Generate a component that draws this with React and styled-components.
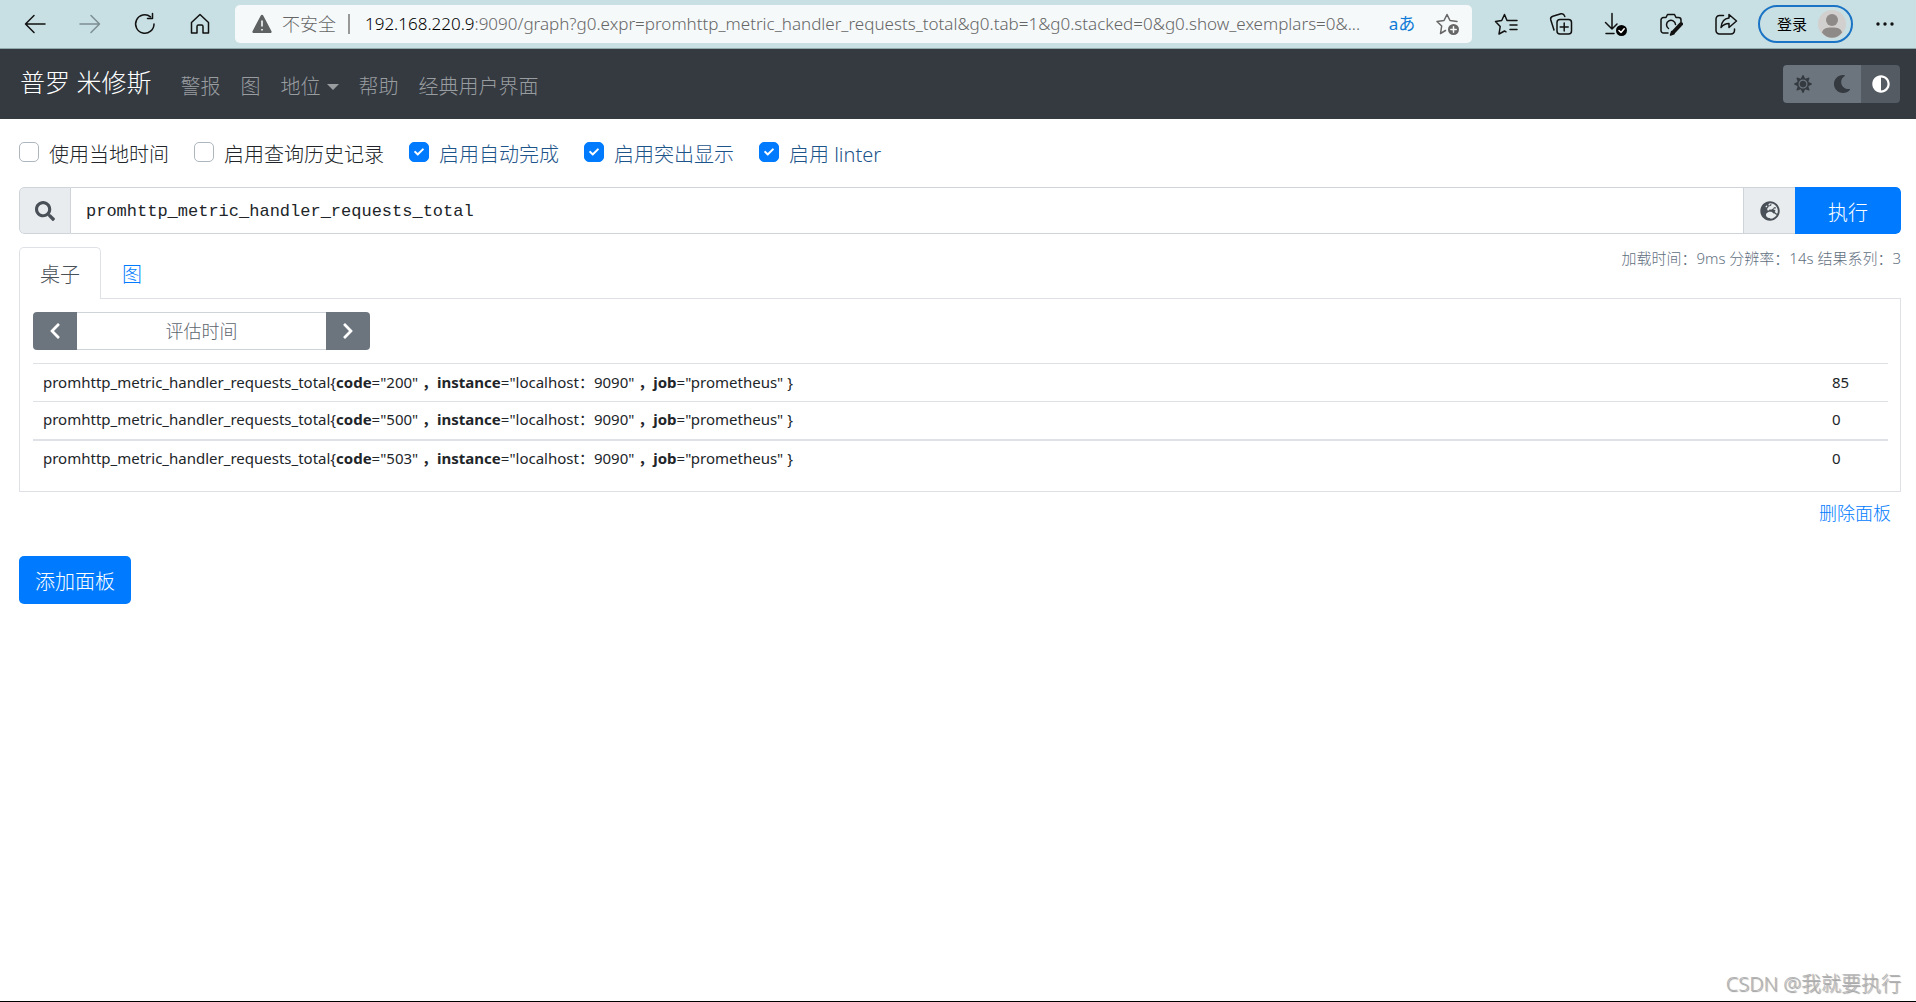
import styled, { createGlobalStyle } from "styled-components";
import {
  FaAdjust,
  FaCheck,
  FaChevronLeft,
  FaChevronRight,
  FaGlobeEurope,
  FaMoon,
  FaSearch,
  FaSun,
} from "react-icons/fa";

const GlobalStyle = createGlobalStyle`
  * {
    box-sizing: border-box;
  }

  body {
    margin: 0;
    background: #fff;
    color: #212529;
    font-family: "Noto Sans", "Noto Sans CJK SC", sans-serif;
    font-size: 20px;
    font-weight: 300;
    line-height: 30px;
  }

  button,
  input {
    font: inherit;
    margin: 0;
  }

  a {
    color: #007bff;
    text-decoration: none;
  }
`;

const Page = styled.div`
  display: flex;
  flex-direction: column;
  min-height: 100vh;
  border-bottom: 1px solid #000;
`;

/* browser bar */

const BrowserBar = styled.header`
  display: flex;
  align-items: center;
  height: 49px;
  padding: 0 15px 0 19px;
  background: #c8dfe3;
  border-bottom: 1px solid #8fa9ac;
`;

const BarButtons = styled.div`
  display: flex;
  align-items: center;
  gap: ${(p) => p.$gap}px;
`;

const BarButton = styled.button`
  display: flex;
  align-items: center;
  justify-content: center;
  width: 32px;
  height: 32px;
  padding: 0;
  border: 0;
  background: none;
  color: ${(p) => p.$color || "#111"};
  font-size: 17px;
  font-weight: 400;
`;

const AddressBar = styled.div`
  flex: 1;
  display: flex;
  align-items: center;
  height: 38px;
  margin: 0 18px 0 19px;
  padding: 0 8px 0 17px;
  border-radius: 5px;
  background: #f5f9fa;
  font-size: 18px;
  color: #666;
`;

const Insecure = styled.span`
  margin-left: 10px;
  padding-right: 12px;
  border-right: 2px solid #999;
  line-height: 20px;
`;

const Host = styled.label`
  margin-left: 15px;
  color: #000;
  font-size: 17px;
`;

const UrlInput = styled.input`
  flex: 1;
  min-width: 0;
  padding: 0;
  border: 0;
  outline: 0;
  background: none;
  color: #666;
  font-size: 17px;
`;

const LoginButton = styled.button`
  display: flex;
  align-items: center;
  gap: 11px;
  height: 38px;
  margin: 0 16px;
  padding: 0 5px 0 17px;
  border: 2px solid #1a73c4;
  border-radius: 19px;
  background: none;
  color: #000;
  font-size: 15px;
  font-weight: 400;
`;

/* prometheus header */

const Navbar = styled.nav`
  display: flex;
  align-items: center;
  height: 70px;
  padding: 0 16px 0 20px;
  background: #343a40;
`;

const Brand = styled.a`
  margin-right: 19px;
  padding-bottom: 4px;
  color: #fff;
  font-size: 25px;
`;

const NavLink = styled.a`
  display: flex;
  align-items: center;
  padding: 5px 10px 0;
  color: #9a9da0;
`;

const Caret = styled.span`
  margin-left: 6px;
  border: 6px solid transparent;
  border-top-color: #9a9da0;
  border-bottom: 0;
`;

const ThemeGroup = styled.div`
  display: flex;
  margin-left: auto;
  border-radius: 4px;
  overflow: hidden;
`;

const ThemeButton = styled.button`
  display: flex;
  align-items: center;
  justify-content: center;
  width: 39px;
  height: 38px;
  padding: 0;
  border: 0;
  background: ${(p) => (p.$active ? "#545b62" : "#6c757d")};
  color: ${(p) => (p.$active ? "#fff" : "#343a40")};
  font-size: 18px;
`;

/* content */

const Main = styled.main`
  padding: 19px 15px 0 19px;
`;

const Options = styled.div`
  display: flex;
  flex-wrap: wrap;
  gap: 25px;
`;

const Option = styled.label`
  display: flex;
  align-items: center;
  gap: 10px;
  padding-top: 2px;
  color: ${(p) => (p.$on ? "#1d5489" : "#212529")};
`;

const Box = styled.span`
  display: grid;
  width: 20px;
  height: 20px;
  margin-bottom: 6px;

  input,
  svg {
    grid-area: 1 / 1;
  }

  input {
    appearance: none;
    width: 20px;
    height: 20px;
    border: 1px solid #adb5bd;
    border-radius: 5px;
    background: #fff;
  }

  input:checked {
    border-color: #007bff;
    background: #007bff;
  }

  svg {
    place-self: center;
    width: 10px;
    height: 10px;
    color: #fff;
    pointer-events: none;
  }
`;

const ExprRow = styled.form`
  display: flex;
  height: 47px;
  margin-top: 17px;
  border-radius: 5px;
  overflow: hidden;
`;

const Addon = styled.label`
  display: flex;
  align-items: center;
  justify-content: center;
  width: 52px;
  border: 1px solid #ced4da;
  border-radius: 5px 0 0 5px;
  background: #e9ecef;
  color: #495057;
  font-size: 20px;
`;

const AddonButton = styled(Addon).attrs({ as: "button", type: "button" })`
  border-right: 0;
  border-radius: 0;
`;

const ExprInput = styled.input`
  flex: 1;
  min-width: 0;
  padding: 2px 15px 0;
  border: 1px solid #ced4da;
  border-width: 1px 0;
  outline: 0;
  color: #212529;
  font-family: "Liberation Mono", monospace;
  font-size: 17px;
`;

const PrimaryButton = styled.button`
  height: ${(p) => p.$height}px;
  padding: 5px ${(p) => p.$pad}px 0;
  border: 0;
  border-radius: ${(p) => (p.$joined ? "0 5px 5px 0" : "5px")};
  background: #007bff;
  color: #fff;
`;

const TabRow = styled.div`
  display: flex;
  align-items: flex-start;
  margin-top: 13px;
`;

const Tab = styled.button`
  height: 52px;
  margin-bottom: -1px;
  padding: 2px 20px 0;
  border: 1px solid ${(p) => (p.$active ? "#dee2e6" : "transparent")};
  border-bottom: 0;
  border-radius: 5px 5px 0 0;
  background: ${(p) => (p.$active ? "#fff" : "none")};
  color: ${(p) => (p.$active ? "#495057" : "#007bff")};
`;

const Stats = styled.span`
  margin-left: auto;
  color: #5f7081;
  font-size: 15px;
  line-height: 22px;
`;

const Panel = styled.section`
  padding: 13px 12px 13px 13px;
  border: 1px solid #dee2e6;
`;

const TimeGroup = styled.div`
  display: flex;
  width: 337px;
  height: 38px;
  margin-bottom: 13px;
`;

const StepButton = styled.button`
  display: flex;
  align-items: center;
  justify-content: center;
  width: 44px;
  border: 0;
  border-radius: ${(p) => (p.$end ? "0 4px 4px 0" : "4px 0 0 4px")};
  background: #6c757d;
  color: #fff;
  font-size: 18px;
`;

const TimeInput = styled.input`
  flex: 1;
  min-width: 0;
  padding: 0;
  border: 1px solid #ced4da;
  border-width: 1px 0;
  outline: 0;
  font-size: 18px;
  text-align: center;

  &::placeholder {
    color: #5c656d;
    opacity: 1;
  }
`;

const ResultTable = styled.table`
  width: 100%;
  border-collapse: collapse;
  font-size: 15px;
  font-weight: 400;
  line-height: 24px;

  td {
    height: 38px;
    padding: 0 10px 2px;
    border-top: 1px solid #dee2e6;
  }

  tr:last-child td {
    border-top-width: 2px;
  }

  td:last-child {
    width: 66px;
  }

  b {
    font-weight: 700;
  }
`;

const PanelFooter = styled.div`
  display: flex;
  justify-content: flex-end;
  padding: 6px 10px 0 0;
  margin-bottom: 28px;
`;

const LinkButton = styled.button`
  padding: 0;
  border: 0;
  background: none;
  color: #007bff;
  font-size: 18px;
`;

const Credit = styled.footer`
  margin-top: auto;
  padding: 0 15px 2px;
  color: #b4b4b4;
  text-align: right;
  text-shadow: 1px 1px 1px #999;
`;

const Icon = ({ size = 24, children }) => (
  <svg
    width={size}
    height={size}
    viewBox="0 0 24 24"
    fill="none"
    stroke="currentColor"
    strokeWidth="1.5"
    strokeLinecap="round"
    strokeLinejoin="round"
    aria-hidden="true"
  >
    {children}
  </svg>
);

const BackIcon = () => (
  <Icon>
    <path d="M22 12H2.500M11 3.500 2.500 12l8.500 8.500" />
  </Icon>
);

const ForwardIcon = () => (
  <Icon>
    <path d="M2 12h19.500M13 3.500l8.500 8.500-8.500 8.500" />
  </Icon>
);

const ReloadIcon = () => (
  <Icon>
    <path d="M21 12a9.200 9.200 0 1 1-3.500-7.200M19.500 1.500v5h-5" />
  </Icon>
);

const HomeIcon = () => (
  <Icon>
    <path d="M3.500 10.500 12 2.500l8.500 8v10.500h-5.500v-6.500a1.500 1.500 0 0 0-1.500-1.500h-3a1.500 1.500 0 0 0-1.500 1.500v6.500H3.500z" />
  </Icon>
);

const WarningIcon = () => (
  <svg width="20" height="20" viewBox="0 0 20 20" aria-hidden="true">
    <path d="M8.800 1.500a1.400 1.400 0 0 1 2.400 0l8.300 15.700a1.300 1.300 0 0 1-1.200 1.900H1.700a1.300 1.300 0 0 1-1.200-1.900z" fill="#5f6263" />
    <path d="M10 6.500v6M10 15v1.500" stroke="#f5f9fa" strokeWidth="1.600" />
  </svg>
);

const AddFavoriteIcon = () => (
  <Icon>
    <path d="M9.500 18.500 4.500 21.500l1.200-7.500L1 9.500l7-1L11 2.500l3 6 7 1" />
    <circle cx="17.500" cy="17.500" r="5.500" fill="currentColor" stroke="none" />
    <path d="M17.500 14.800v5.400M14.800 17.500h5.400" stroke="#f5f9fa" />
  </Icon>
);

const FavoritesIcon = () => (
  <Icon>
    <path d="M14.500 8.500h8.500M16 13h7M16 17.500h7M14 8.500h-1L10.500 2.500 7.700 8.500 1.500 9.500l4.700 5-1.200 7.500 5.500-3 1.500.8" />
  </Icon>
);

const CollectionsIcon = () => (
  <Icon>
    <rect x="8" y="7.500" width="14.500" height="14.500" rx="3" />
    <path d="M15.200 11v8M11.200 15h8M5 18 1.800 8a3 3 0 0 1 2-3.700L12 1.800a3 3 0 0 1 3.500 2l.3.700" />
  </Icon>
);

const DownloadIcon = () => (
  <Icon>
    <path d="M8 1.500V17M1.500 10.500 8 17l5-5M2 21.500h8" />
    <circle cx="17.500" cy="18.500" r="5.500" fill="#000" stroke="none" />
    <path d="m15 18.500 2 2 3.200-3.700" stroke="#fff" />
  </Icon>
);

const CaptureIcon = () => (
  <Icon>
    <path d="M9 21H4.500A2.500 2.500 0 0 1 2 18.500V8a2.500 2.500 0 0 1 2.500-2.500H7L8.500 2.500h7L17 5.500h2.500A2.500 2.500 0 0 1 22 8v2M9.500 16.500a4.500 4.500 0 1 1 7-4" />
    <path d="m14.500 20 7.500-8" strokeWidth="4" />
    <path d="m11.500 23 1.200-3.500 2.300 2.300z" fill="currentColor" />
  </Icon>
);

const ShareIcon = () => (
  <Icon>
    <path d="M9.500 3.500h-4A3.500 3.500 0 0 0 2 7v11.500A3.500 3.500 0 0 0 5.500 22H17a3.500 3.500 0 0 0 3.500-3.500V17" />
    <path d="M15 2.500 22.500 9 15 15.500v-4c-4 0-6 1.500-8 4 .5-5.500 3-9 8-9.500z" />
  </Icon>
);

const MoreIcon = () => (
  <Icon>
    <g fill="currentColor" stroke="none">
      <circle cx="5" cy="12" r="1.700" />
      <circle cx="12" cy="12" r="1.700" />
      <circle cx="19" cy="12" r="1.700" />
    </g>
  </Icon>
);

const Avatar = () => (
  <svg width="28" height="28" viewBox="0 0 28 28" aria-hidden="true">
    <circle cx="14" cy="14" r="14" fill="#d2d0ce" />
    <circle cx="14" cy="10" r="6" fill="#8e8a87" />
    <path d="M4 22.500c1-4 4-5 10-5s9 1 10 5c-5 7-15 7-20 0z" fill="#8e8a87" />
  </svg>
);

const options = [
  { id: "local-time", label: "使用当地时间", on: false },
  { id: "history", label: "启用查询历史记录", on: false },
  { id: "autocomplete", label: "启用自动完成", on: true },
  { id: "highlighting", label: "启用突出显示", on: true },
  { id: "linter", label: "启用 linter", on: true },
];

const results = [
  { code: "200", value: 85 },
  { code: "500", value: 0 },
  { code: "503", value: 0 },
];

const App = () => {
  return (
    <Page>
      <GlobalStyle />
      <BrowserBar>
        <BarButtons $gap={23}>
          <BarButton aria-label="返回"><BackIcon /></BarButton>
          <BarButton aria-label="前进" $color="#7d8f93"><ForwardIcon /></BarButton>
          <BarButton aria-label="刷新"><ReloadIcon /></BarButton>
          <BarButton aria-label="主页"><HomeIcon /></BarButton>
        </BarButtons>
        <AddressBar>
          <WarningIcon />
          <Insecure>不安全</Insecure>
          <Host htmlFor="url">192.168.220.9</Host>
          <UrlInput
            id="url"
            defaultValue=":9090/graph?g0.expr=promhttp_metric_handler_requests_total&g0.tab=1&g0.stacked=0&g0.show_exemplars=0&..."
          />
          <BarButtons $gap={14}>
            <BarButton $color="#0f7bd6">aあ</BarButton>
            <BarButton aria-label="收藏" $color="#666"><AddFavoriteIcon /></BarButton>
          </BarButtons>
        </AddressBar>
        <BarButtons $gap={23}>
          <BarButton aria-label="收藏夹"><FavoritesIcon /></BarButton>
          <BarButton aria-label="集锦"><CollectionsIcon /></BarButton>
          <BarButton aria-label="下载"><DownloadIcon /></BarButton>
          <BarButton aria-label="截图"><CaptureIcon /></BarButton>
          <BarButton aria-label="共享"><ShareIcon /></BarButton>
        </BarButtons>
        <LoginButton>
          登录
          <Avatar />
        </LoginButton>
        <BarButton aria-label="更多"><MoreIcon /></BarButton>
      </BrowserBar>

      <Navbar>
        <Brand href="#">普罗 米修斯</Brand>
        <NavLink href="#">警报</NavLink>
        <NavLink href="#">图</NavLink>
        <NavLink href="#">地位<Caret /></NavLink>
        <NavLink href="#">帮助</NavLink>
        <NavLink href="#">经典用户界面</NavLink>
        <ThemeGroup>
          <ThemeButton aria-label="浅色"><FaSun /></ThemeButton>
          <ThemeButton aria-label="深色"><FaMoon /></ThemeButton>
          <ThemeButton aria-label="自动" $active><FaAdjust /></ThemeButton>
        </ThemeGroup>
      </Navbar>

      <Main>
        <Options>
          {options.map((o) => (
            <Option key={o.id} htmlFor={o.id} $on={o.on}>
              <Box>
                <input type="checkbox" id={o.id} defaultChecked={o.on} />
                {o.on && <FaCheck />}
              </Box>
              {o.label}
            </Option>
          ))}
        </Options>

        <ExprRow onSubmit={(e) => e.preventDefault()}>
          <Addon htmlFor="expr"><FaSearch /></Addon>
          <ExprInput id="expr" defaultValue="promhttp_metric_handler_requests_total" />
          <AddonButton aria-label="指标"><FaGlobeEurope /></AddonButton>
          <PrimaryButton $height={47} $pad={33} $joined>执行</PrimaryButton>
        </ExprRow>

        <TabRow>
          <Tab $active>桌子</Tab>
          <Tab>图</Tab>
          <Stats>加载时间：9ms 分辨率：14s 结果系列：3</Stats>
        </TabRow>
        <Panel>
          <TimeGroup>
            <StepButton aria-label="后退"><FaChevronLeft /></StepButton>
            <TimeInput aria-label="评估时间" placeholder="评估时间" />
            <StepButton aria-label="前进" $end><FaChevronRight /></StepButton>
          </TimeGroup>
          <ResultTable>
            <tbody>
              {results.map((r) => (
                <tr key={r.code}>
                  <td>
                    promhttp_metric_handler_requests_total{"{"}
                    <b>code</b>="{r.code}" <b>，instance</b>="localhost：9090" <b>，job</b>="prometheus" {"}"}
                  </td>
                  <td>{r.value}</td>
                </tr>
              ))}
            </tbody>
          </ResultTable>
        </Panel>
        <PanelFooter>
          <LinkButton>删除面板</LinkButton>
        </PanelFooter>
        <PrimaryButton $height={48} $pad={16}>添加面板</PrimaryButton>
      </Main>
      <Credit>CSDN @我就要执行</Credit>
    </Page>
  );
};

export default App;
